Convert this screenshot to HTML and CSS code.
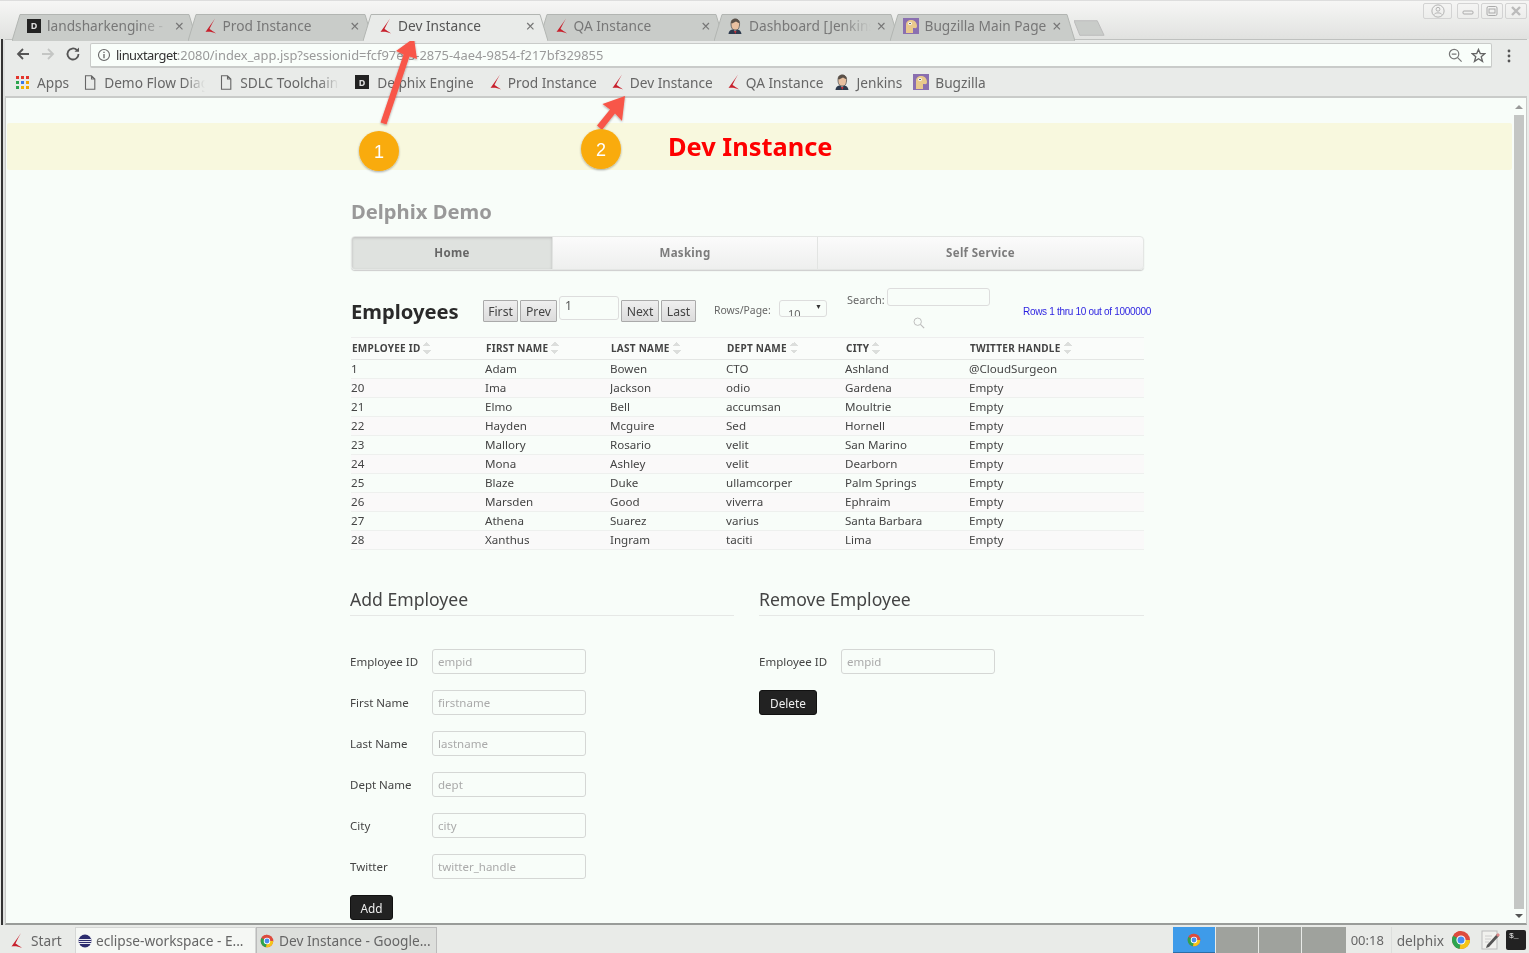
FILE: index.html
```html
<!DOCTYPE html>
<html lang="en">
<head>
<meta charset="utf-8">
<title>Dev Instance</title>
<link rel="stylesheet" href="styles.css">
</head>
<body>
<svg class="defs" width="0" height="0" aria-hidden="true">
  <symbol id="swoosh" viewBox="0 0 14 16"><path d="M12 .5C9.500 4 6 9 2.500 14C6 13.300 9.500 14 13 15.500C10.500 13.500 8 12 6.500 11C8 7.500 10 4 12 .5Z" fill="#c8202c"/></symbol>
  <symbol id="jenkins" viewBox="0 0 16 16"><path d="M4 6C4 2 6 1 8.500 1S13 3 12.500 7 11 12 8 12 4 9 4 6Z" fill="#e8c0a0" stroke="#555" stroke-width=".8"/><path d="M4 5C4 1.500 7 .5 9 .8S13 3 12.600 5.500L9 3.600 5 5.500Z" fill="#5a5048"/><path d="M1.500 16C2 12.500 4 11.500 6 11.500L8 13 10.500 11.500C13 12 14 13.500 14.500 16Z" fill="#2d3a4d"/><path d="M7 13H9.500L8.300 16Z" fill="#c8303a"/></symbol>
  <symbol id="bugzilla" viewBox="0 0 16 16"><rect width="16" height="16" fill="#8a6fb0"/><path d="M3 15V7C3 3 6 1.500 9 2S14 5 14 8 12 10 10 10V15Z" fill="#e9c98c"/><circle cx="7" cy="5.500" r="1.800" fill="#fff"/><circle cx="7" cy="5.500" r=".8" fill="#333"/></symbol>
  <symbol id="page" viewBox="0 0 12 15"><path d="M1.500 .8H7.500L10.800 4V14.200H1.500Z M7.500 .8V4H10.800" fill="none" stroke="#666" stroke-width="1.100"/></symbol>
  <symbol id="chrome" viewBox="0 0 20 20"><circle cx="10" cy="10" r="9" fill="#dd4b3e"/><path d="M10 10H19A9 9 0 0 1 8.500 18.900Z" fill="#f5c518"/><path d="M10 10L8.500 18.900A9 9 0 0 1 2.200 5.500Z" fill="#2da44e"/><path d="M10 10L2.200 5.500A9 9 0 0 1 10 1Z" fill="#dd4b3e"/><circle cx="10" cy="10" r="4.600" fill="#fff"/><circle cx="10" cy="10" r="3.500" fill="#4a8cf0"/></symbol>
</svg>

<div class="titlebar">
  <div class="tabs">
    <div class="tab">
      <svg class="tab-shape" viewBox="0 0 185 27" preserveAspectRatio="none"><path d="M0 27L8 .5H177L185 27"/></svg>
      <span class="dfav">D</span><span class="tab-label fade">landsharkengine -</span><span class="tab-x">×</span>
    </div>
    <div class="tab">
      <svg class="tab-shape" viewBox="0 0 185 27" preserveAspectRatio="none"><path d="M0 27L8 .5H177L185 27"/></svg>
      <svg class="fav"><use href="#swoosh"/></svg><span class="tab-label">Prod Instance</span><span class="tab-x">×</span>
    </div>
    <div class="tab active">
      <svg class="tab-shape" viewBox="0 0 185 27" preserveAspectRatio="none"><path d="M0 27L8 .5H177L185 27"/></svg>
      <svg class="fav"><use href="#swoosh"/></svg><span class="tab-label">Dev Instance</span><span class="tab-x">×</span>
    </div>
    <div class="tab">
      <svg class="tab-shape" viewBox="0 0 185 27" preserveAspectRatio="none"><path d="M0 27L8 .5H177L185 27"/></svg>
      <svg class="fav"><use href="#swoosh"/></svg><span class="tab-label">QA Instance</span><span class="tab-x">×</span>
    </div>
    <div class="tab">
      <svg class="tab-shape" viewBox="0 0 185 27" preserveAspectRatio="none"><path d="M0 27L8 .5H177L185 27"/></svg>
      <svg class="fav fav-lg"><use href="#jenkins"/></svg><span class="tab-label fade">Dashboard [Jenkins]</span><span class="tab-x">×</span>
    </div>
    <div class="tab">
      <svg class="tab-shape" viewBox="0 0 185 27" preserveAspectRatio="none"><path d="M0 27L8 .5H177L185 27"/></svg>
      <svg class="fav fav-lg"><use href="#bugzilla"/></svg><span class="tab-label">Bugzilla Main Page</span><span class="tab-x">×</span>
    </div>
    <svg class="newtab" viewBox="0 0 32 16"><path d="M0 .5H24L31 15.500H6Z"/></svg>
  </div>
  <div class="winbtns">
    <span class="winbtn user"><svg viewBox="0 0 16 16" width="14" height="14"><circle cx="8" cy="8" r="7" fill="none" stroke="#aaa"/><circle cx="8" cy="6" r="2.200" fill="none" stroke="#aaa"/><path d="M3.500 12C5 9.500 11 9.500 12.500 12" fill="none" stroke="#aaa"/></svg></span>
    <span class="winbtn"><svg viewBox="0 0 12 12" width="12" height="12"><rect x="1" y="6" width="10" height="3" rx="1" fill="none" stroke="#aaa"/></svg></span>
    <span class="winbtn"><svg viewBox="0 0 12 12" width="12" height="12"><rect x="1" y="1.500" width="10" height="9" rx="1.500" fill="none" stroke="#aaa"/><rect x="3" y="4" width="6" height="4" fill="none" stroke="#aaa"/></svg></span>
    <span class="winbtn"><svg viewBox="0 0 12 12" width="12" height="12"><path d="M2 2L10 10M10 2L2 10" stroke="#bbb" stroke-width="2.400" fill="none"/></svg></span>
  </div>
</div>

<div class="frame">
  <div class="toolbar">
    <svg class="navicon" viewBox="0 0 16 16"><path d="M14 8H3M8 3L3 8L8 13" fill="none" stroke="#555" stroke-width="1.800"/></svg>
    <svg class="navicon" viewBox="0 0 16 16"><path d="M2 8H13M8 3L13 8L8 13" fill="none" stroke="#c4c6c4" stroke-width="1.800"/></svg>
    <svg class="navicon" viewBox="0 0 16 16"><path d="M13.500 8A5.500 5.500 0 1 1 11.800 4" fill="none" stroke="#555" stroke-width="1.800"/><path d="M9.500 5.800H14V1.500Z" fill="#555"/></svg>
    <div class="omnibox">
      <svg class="info" viewBox="0 0 14 14"><circle cx="7" cy="7" r="5.500" fill="none" stroke="#666" stroke-width="1.100"/><path d="M7 6V10.200M7 3.800V5" stroke="#666" stroke-width="1.300"/></svg>
      <span class="url"><span class="host">linuxtarget</span>:2080/index_app.jsp?sessionid=fcf97ef5-2875-4ae4-9854-f217bf329855</span>
      <svg class="omni-icon" viewBox="0 0 16 16"><circle cx="6.500" cy="6.500" r="5" fill="none" stroke="#777" stroke-width="1.300"/><path d="M4 6.500H9M10 10L14.500 14.500" stroke="#777" stroke-width="1.300"/></svg>
      <svg class="omni-icon" viewBox="0 0 16 16"><path d="M8 1.500L9.900 6H14.800L10.900 9.200L12.300 14.300L8 11.400L3.700 14.300L5.100 9.200L1.200 6H6.100Z" fill="none" stroke="#666" stroke-width="1.400"/></svg>
    </div>
    <svg class="menu" viewBox="0 0 4 14"><circle cx="2" cy="2" r="1.400"/><circle cx="2" cy="7" r="1.400"/><circle cx="2" cy="12" r="1.400"/></svg>
  </div>

  <div class="bookmarks">
    <span class="bm apps">
      <svg class="appgrid" viewBox="0 0 13 13"><rect width="3" height="3" fill="#e3352c"/><rect x="5" width="3" height="3" fill="#e3352c"/><rect x="10" width="3" height="3" fill="#e3352c"/><rect y="5" width="3" height="3" fill="#2da44e"/><rect x="5" y="5" width="3" height="3" fill="#3a78e6"/><rect x="10" y="5" width="3" height="3" fill="#f0a400"/><rect y="10" width="3" height="3" fill="#2da44e"/><rect x="5" y="10" width="3" height="3" fill="#f0b400"/><rect x="10" y="10" width="3" height="3" fill="#f0a400"/></svg>
      Apps</span>
    <span class="bm bm-mid"><svg class="bm-page"><use href="#page"/></svg><span class="bm-clip w1">Demo Flow Diagram</span></span>
    <span class="bm bm-wide"><svg class="bm-page"><use href="#page"/></svg><span class="bm-clip w2">SDLC Toolchain</span></span>
    <span class="bm bm-next"><span class="dfav">D</span>Delphix Engine</span>
    <span class="bm"><svg class="fav"><use href="#swoosh"/></svg>Prod Instance</span>
    <span class="bm"><svg class="fav"><use href="#swoosh"/></svg>Dev Instance</span>
    <span class="bm bm-tight"><svg class="fav"><use href="#swoosh"/></svg>QA Instance</span>
    <span class="bm bm-tight"><svg class="fav fav-lg"><use href="#jenkins"/></svg>Jenkins</span>
    <span class="bm"><svg class="fav fav-lg"><use href="#bugzilla"/></svg>Bugzilla</span>
  </div>

  <div class="viewport">
    <main class="page">
      <div class="banner"><h1>Dev Instance</h1></div>
      <div class="container">
        <h2 class="brand">Delphix Demo</h2>
        <nav class="nav">
          <a class="nav-item current">Home</a>
          <a class="nav-item masking">Masking</a>
          <a class="nav-item self">Self Service</a>
        </nav>
        <div class="controls">
          <h3 class="emp-title">Employees</h3>
          <div class="pager">
            <button class="pg first">First</button>
            <button class="pg prev">Prev</button>
            <input class="pg-input" value="1" aria-label="page">
            <button class="pg next">Next</button>
            <button class="pg last">Last</button>
          </div>
          <label class="rows-label">Rows/Page:</label>
          <div class="rows-select"><span class="rows-val">10</span><span class="caret">▼</span></div>
          <div class="search">
            <div class="search-row"><label>Search:</label><input class="search-input" aria-label="search"></div>
            <svg class="search-icon" viewBox="0 0 14 14"><circle cx="5.500" cy="5.500" r="4.300" fill="none" stroke="#bbb" stroke-width="1.100"/><path d="M8.700 8.700L13 13" stroke="#bbb" stroke-width="1.300"/></svg>
          </div>
          <div class="rows-info">Rows 1 thru 10 out of 1000000</div>
        </div>
        <table class="grid">
          <colgroup><col class="c1"><col class="c2"><col class="c3"><col class="c4"><col class="c5"><col class="c6"></colgroup>
          <thead>
            <tr>
              <th>EMPLOYEE ID<span class="sort"></span></th>
              <th>FIRST NAME<span class="sort"></span></th>
              <th>LAST NAME<span class="sort"></span></th>
              <th>DEPT NAME<span class="sort"></span></th>
              <th>CITY<span class="sort"></span></th>
              <th>TWITTER HANDLE<span class="sort"></span></th>
            </tr>
          </thead>
          <tbody>
            <tr><td>1</td><td>Adam</td><td>Bowen</td><td>CTO</td><td>Ashland</td><td>@CloudSurgeon</td></tr>
            <tr><td>20</td><td>Ima</td><td>Jackson</td><td>odio</td><td>Gardena</td><td>Empty</td></tr>
            <tr><td>21</td><td>Elmo</td><td>Bell</td><td>accumsan</td><td>Moultrie</td><td>Empty</td></tr>
            <tr><td>22</td><td>Hayden</td><td>Mcguire</td><td>Sed</td><td>Hornell</td><td>Empty</td></tr>
            <tr><td>23</td><td>Mallory</td><td>Rosario</td><td>velit</td><td>San Marino</td><td>Empty</td></tr>
            <tr><td>24</td><td>Mona</td><td>Ashley</td><td>velit</td><td>Dearborn</td><td>Empty</td></tr>
            <tr><td>25</td><td>Blaze</td><td>Duke</td><td>ullamcorper</td><td>Palm Springs</td><td>Empty</td></tr>
            <tr><td>26</td><td>Marsden</td><td>Good</td><td>viverra</td><td>Ephraim</td><td>Empty</td></tr>
            <tr><td>27</td><td>Athena</td><td>Suarez</td><td>varius</td><td>Santa Barbara</td><td>Empty</td></tr>
            <tr><td>28</td><td>Xanthus</td><td>Ingram</td><td>taciti</td><td>Lima</td><td>Empty</td></tr>
          </tbody>
        </table>
        <div class="forms">
          <form class="form">
            <h3 class="form-title">Add Employee</h3>
            <div class="field"><label>Employee ID</label><input placeholder="empid"></div>
            <div class="field"><label>First Name</label><input placeholder="firstname"></div>
            <div class="field"><label>Last Name</label><input placeholder="lastname"></div>
            <div class="field"><label>Dept Name</label><input placeholder="dept"></div>
            <div class="field"><label>City</label><input placeholder="city"></div>
            <div class="field"><label>Twitter</label><input placeholder="twitter_handle"></div>
            <button type="button" class="dark add">Add</button>
          </form>
          <form class="form">
            <h3 class="form-title">Remove Employee</h3>
            <div class="field"><label>Employee ID</label><input placeholder="empid"></div>
            <button type="button" class="dark delete">Delete</button>
          </form>
        </div>
      </div>
    </main>
    <div class="scrollbar">
      <span class="sb-up"></span>
      <span class="sb-thumb"></span>
      <span class="sb-down"></span>
    </div>
  </div>
</div>

<footer class="taskbar">
  <span class="start"><svg class="start-icon"><use href="#swoosh"/></svg>Start</span>
  <span class="task eclipse"><svg class="task-icon" viewBox="0 0 14 14"><circle cx="7" cy="7" r="6.500" fill="#2c2c6e"/><path d="M.8 5.500H13.200M.5 7.500H13.500M1 9.500H13" stroke="#fff" stroke-width=".9"/></svg><span class="task-text">eclipse-workspace - E...</span></span>
  <span class="task on"><svg class="task-icon"><use href="#chrome"/></svg><span class="task-text">Dev Instance - Google...</span></span>
  <span class="tray-spacer"></span>
  <span class="pager-desk blue"><svg class="task-icon"><use href="#chrome"/></svg></span>
  <span class="pager-desk"></span>
  <span class="pager-desk"></span>
  <span class="pager-desk w3"></span>
  <span class="clock">00:18</span>
  <span class="who">delphix</span>
  <svg class="tray-chrome"><use href="#chrome"/></svg>
  <svg class="tray-note" viewBox="0 0 20 20"><rect x="2" y="1" width="15" height="18" fill="#f1f1ee" stroke="#bbb"/><path d="M5 6H12M5 9H11M5 12H9" stroke="#ccc"/><path d="M7 15L17 4L19 6L9 17L6 18Z" fill="#555"/><path d="M16 5L18 3L20 5L18 7Z" fill="#d88"/></svg>
  <span class="tray-term">$_</span>
</footer>

<div class="annot" aria-hidden="true">
  <svg class="annot-svg" viewBox="0 0 1529 953">
    <defs><filter id="sh" x="-20%" y="-20%" width="140%" height="140%"><feDropShadow dx="0" dy="1" stdDeviation="1" flood-color="#000" flood-opacity=".35"/></filter></defs>
    <path filter="url(#sh)" fill="#f8574a" d="M414 38L417 59L409.500 56.500L386.500 124.500L380.500 122.500L403.500 54.500L396 51Z"/>
    <path filter="url(#sh)" fill="#f8574a" d="M625 96L622 121L615 113.500L602 130L597 125.500L610 109.500L602.500 104Z"/>
    <circle filter="url(#sh)" cx="379" cy="151" r="20" fill="#f9ab0e"/>
    <circle filter="url(#sh)" cx="601" cy="149" r="20" fill="#f9ab0e"/>
  </svg>
  <span class="num n1">1</span>
  <span class="num n2">2</span>
</div>
</body>
</html>
```
FILE: styles.css
```css
* { box-sizing: border-box; }
html, body { height: 100%; }
body {
  margin: 0;
  height: 953px;
  overflow: hidden;
  display: flex;
  flex-direction: column;
  position: relative;
  font-family: "Noto Sans", sans-serif;
  font-size: 13px;
  color: #444;
  background: #e9ebe8;
  filter: blur(.35px);
}
.defs { position: absolute; }

/* Browser chrome */
.titlebar {
  height: 39px;
  flex: none;
  display: flex;
  justify-content: space-between;
  padding: 13px 2px 0 12px;
  background: linear-gradient(#f6f6f5, #e1e2e0);
  border-top: 1px solid #ddd;
}
.tabs { display: flex; align-items: flex-start; height: 26px; }
.tab {
  position: relative;
  width: 185px;
  height: 26px;
  margin-right: -9.500px;
  padding: 0 13px 3px 15px;
  display: flex;
  align-items: center;
  color: #777;
  font-size: 13.700px;
  white-space: nowrap;
}
.tab-shape { position: absolute; inset: 0; width: 100%; height: 27px; fill: #c9ccc9; stroke: #b2b5b2; stroke-width: 1; }
.tab > *:not(.tab-shape) { position: relative; }
.tab.active { color: #555; z-index: 2; }
.tab.active .tab-shape { fill: #e9ebe9; }
.tab-label { flex: 1; min-width: 0; overflow: hidden; margin-left: 6px; }
.tab-label.fade { -webkit-mask-image: linear-gradient(90deg, #000 75%, transparent 100%); mask-image: linear-gradient(90deg, #000 75%, transparent 100%); }
.tab-x { color: #777; font-size: 16px; line-height: 1; margin-left: 6px; }
.newtab { width: 31px; height: 16px; margin: 6px 0 0 9px; fill: #c9ccc9; stroke: #bbb; }
.fav { width: 14px; height: 16px; flex: none; }
.fav-lg { width: 16px; }
.tab .fav-lg { margin-left: -2px; }
.dfav {
  display: inline-flex;
  align-items: center;
  justify-content: center;
  flex: none;
  width: 14px;
  height: 14px;
  background: #222;
  color: #ddd;
  font-size: 9px;
  font-weight: 700;
}
.winbtns { display: flex; gap: 2px; margin-top: -11px; height: 16px; }
.winbtn {
  width: 22px;
  height: 16px;
  display: flex;
  align-items: center;
  justify-content: center;
  border: 1px solid #d3d3d3;
  border-radius: 2px;
}
.winbtn.user { width: 29px; margin-right: 3px; }

/* Window frame below the tab strip: dark edge at the left */
.frame {
  flex: 1;
  min-height: 0;
  display: flex;
  flex-direction: column;
  margin: 0 2px 0 1px;
  padding-left: 2px;
  border-left: 2px solid #333;
  background: #dfe1df;
}
.toolbar {
  height: 29px;
  flex: none;
  display: flex;
  align-items: center;
  gap: 9px;
  padding: 0 16px 0 10px;
  background: #e9ebe9;
  border-top: 1px solid #bfc1bf;
}
.navicon { width: 16px; height: 16px; flex: none; }
.omnibox {
  flex: 1;
  height: 25px;
  margin-top: 3px;
  display: flex;
  align-items: center;
  gap: 8px;
  padding: 0 5px 0 6px;
  background: #f9fefa;
  border: 1px solid #c9cbc9;
  border-bottom-width: 2px;
  border-radius: 2px;
}
.info { width: 14px; height: 14px; flex: none; }
.url { flex: 1; font-size: 12.900px; color: #9a9a9a; white-space: nowrap; margin-left: -3px; }
.host { color: #333; letter-spacing: -.5px; }
.omni-icon { width: 15px; height: 15px; flex: none; }
.menu { width: 4px; height: 14px; margin: 3px 0 0 6px; fill: #555; flex: none; }

.bookmarks {
  height: 30px;
  flex: none;
  display: flex;
  align-items: center;
  padding-left: 11px;
  background: #e9ebe9;
  border-bottom: 2px solid #c9cbc9;
  font-size: 13.700px;
  color: #666;
  white-space: nowrap;
}
.bm { display: flex; align-items: center; margin-right: 13px; gap: 6px; }
.bm-page { width: 12px; height: 15px; margin-right: 2px; flex: none; }
.bm .dfav { margin-right: 2px; }
.bm-mid { margin-right: 15px; }
.bm-wide { margin-right: 16px; }
.bm-next { margin-right: 14px; }
.bm-tight { margin-right: 11px; }
.bm-clip { display: block; overflow: hidden; -webkit-mask-image: linear-gradient(90deg, #000 80%, transparent 100%); mask-image: linear-gradient(90deg, #000 80%, transparent 100%); }
.w1 { width: 101px; }
.w2 { width: 99px; }
.apps { gap: 8px; margin-right: 15px; }
.appgrid { width: 13px; height: 13px; }

/* Viewport */
.viewport {
  flex: 1;
  min-height: 0;
  display: flex;
  background: #f8fdf9;
  border-left: 1px solid #c9cbc9;
  border-bottom: 2px solid #999c99;
  border-right: 1px solid #c9cbc9;
}
.page { flex: 1; min-width: 0; overflow: hidden; padding-top: 25px; }
.banner {
  height: 47px;
  margin-left: 1px;
  padding-left: 661px;
  background: #f8f8de;
  border-radius: 2px;
}
.banner h1 { margin: 0; font-size: 25.400px; line-height: 47px; color: #fe0000; font-weight: 700; }
.container { width: 793px; margin-left: 345px; }
.brand { margin: 26px 0 10px; font-size: 20.200px; line-height: 30px; font-weight: 700; color: #999; }
.nav {
  display: flex;
  height: 34px;
  border: 1px solid #e4e6e4;
  border-radius: 4px;
  overflow: hidden;
  box-shadow: 0 1px 1px #ccc;
  background: linear-gradient(#fbfbfb, #eeefee);
}
.nav-item {
  display: flex;
  align-items: center;
  justify-content: center;
  padding-bottom: 2px;
  font-size: 11.500px;
  font-weight: 700;
  color: #7c7c7c;
  letter-spacing: .3px;
  border-right: 1px solid #e2e4e2;
}
.nav-item.current { width: 201px; background: #dfe2df; color: #666; box-shadow: inset 0 1px 3px #bbb; }
.nav-item.masking { width: 265px; }
.nav-item.self { flex: 1; border-right: 0; }

.controls { position: relative; display: flex; height: 67px; align-items: flex-start; }
.emp-title { margin: 26px 0 0; font-size: 20.200px; line-height: 30px; font-weight: 700; color: #2a2a2a; width: 132px; flex: none; }
.pager { display: flex; align-items: flex-start; gap: 2px; margin-top: 25px; flex: none; }
.pg {
  height: 22px;
  margin-top: 5px;
  padding: 0;
  font: 12.200px "Noto Sans", sans-serif;
  color: #444;
  background: linear-gradient(#efefef, #dcdcdc);
  border: 1px solid #aaa;
  border-radius: 1px;
}
.first { width: 35px; }
.prev { width: 37px; }
.next { width: 38px; }
.last { width: 35px; }
.pg-input {
  width: 60px;
  height: 24px;
  margin-top: 1px;
  padding: 0 5px 6px;
  font: 12.200px "Noto Sans", sans-serif;
  color: #555;
  background: #f8fdf9;
  border: 1px solid #ddd;
  border-radius: 3px;
}
.rows-label { margin: 32px 0 0 18px; width: 65px; flex: none; font-size: 10.400px; line-height: 16px; color: #666; }
.rows-select {
  position: relative;
  width: 48px;
  height: 17px;
  margin-top: 30px;
  overflow: hidden;
  padding-left: 8px;
  border: 1px solid #ddd;
  border-radius: 3px;
  font-size: 11px;
  color: #666;
  flex: none;
}
.rows-val { display: block; line-height: 25px; }
.caret { position: absolute; right: 4px; top: 1px; font-size: 7px; line-height: 10px; color: #333; }
.search { width: 143px; margin: 18px 0 0 20px; flex: none; }
.search-row { display: flex; align-items: flex-start; gap: 2px; font-size: 11px; color: #666; }
.search-row label { margin-top: 4px; }
.search-input { width: 103px; height: 18px; background: #f8fdf9; border: 1px solid #ddd; border-radius: 3px; padding: 0; }
.search-icon { display: block; width: 12px; height: 12px; margin: 10px 0 0 66px; }
.rows-info {
  position: absolute;
  left: 672px;
  top: 35px;
  font: 10px/14px "Liberation Sans", Arial, sans-serif;
  letter-spacing: -.3px;
  color: #2a1fe0;
  white-space: nowrap;
}

.grid { width: 793px; border-collapse: collapse; table-layout: fixed; font-size: 11.600px; color: #444; }
.c1 { width: 134px; }
.c2 { width: 125px; }
.c3 { width: 116px; }
.c4 { width: 119px; }
.c5 { width: 124px; }
.grid th {
  height: 22px;
  padding: 0 0 2px 1px;
  line-height: 14px;
  text-align: left;
  font-size: 10px;
  letter-spacing: .25px;
  font-weight: 700;
  color: #444;
  background: #fafcfa;
  border-top: 1px solid #eee;
  border-bottom: 1px solid #e4e6e4;
  white-space: nowrap;
}
.sort {
  display: inline-block;
  vertical-align: -3px;
  width: 8px;
  height: 15px;
  margin-left: 3px;
  background:
    linear-gradient(135deg, transparent 50%, #dcdedc 50%) 0 2px / 4px 4px no-repeat,
    linear-gradient(225deg, transparent 50%, #dcdedc 50%) 4px 2px / 4px 4px no-repeat,
    linear-gradient(45deg, transparent 50%, #dcdedc 50%) 0 10px / 4px 4px no-repeat,
    linear-gradient(315deg, transparent 50%, #dcdedc 50%) 4px 10px / 4px 4px no-repeat;
}
.grid td { height: 19px; padding: 0 0 1px; border-bottom: 1px solid #eef0ee; white-space: nowrap; overflow: hidden; line-height: 17px; }
.grid tbody tr:nth-child(even) td { background: #faf9f9; }

.forms { display: grid; grid-template-columns: 384px 385px; column-gap: 25px; margin-left: -1px; margin-top: 36px; }
.form-title { margin: 0 0 33px; padding-bottom: 3px; font-size: 17.600px; line-height: 26px; font-weight: 400; color: #444; border-bottom: 1px solid #e6e8e6; }
.field { display: flex; align-items: center; height: 25px; margin-bottom: 16px; font-size: 11.500px; color: #444; }
.field label { width: 82px; flex: none; }
.field input {
  width: 154px;
  height: 25px;
  padding: 0 5px;
  font: 11.500px "Noto Sans", sans-serif;
  background: #f8fdf9;
  border: 1px solid #d5d7d5;
  border-radius: 3px;
}
.field input::placeholder { color: #aaa; opacity: 1; }
.dark {
  display: block;
  height: 25px;
  padding: 0;
  font: 11.800px "Noto Sans", sans-serif;
  color: #eee;
  background: #222;
  border: 1px solid #111;
  border-radius: 3px;
}
.add { width: 43px; margin-top: 1px; }
.delete { width: 58px; }

.scrollbar {
  width: 14px;
  flex: none;
  display: flex;
  flex-direction: column;
  align-items: center;
  padding: 7px 0 5px;
  background: #f8fdf9;
}
.sb-up { width: 0; height: 0; border: 4px solid transparent; border-top: 0; border-bottom: 4px solid #999; }
.sb-thumb { width: 10px; flex: 1; margin: 6px 0 5px; background: #c4c6c4; }
.sb-down { width: 0; height: 0; border: 4px solid transparent; border-bottom: 0; border-top: 4px solid #555; }

/* Taskbar */
.taskbar {
  height: 28px;
  flex: none;
  display: flex;
  align-items: stretch;
  padding-top: 2px;
  background: #e9ebe8;
  font-size: 13.700px;
  color: #666;
  white-space: nowrap;
}
.start { display: flex; align-items: center; width: 75px; padding-left: 9px; gap: 8px; color: #666; }
.start-icon { width: 14px; height: 19px; flex: none; }
.task {
  width: 181px;
  display: flex;
  align-items: center;
  gap: 5px;
  padding-left: 3px;
  background: #f5f7f4;
  border: 1px solid #d5d7d5;
  border-bottom: 0;
  color: #666;
}
.task.eclipse { padding-left: 2px; gap: 4px; }
.task.on { background: #dddfdc; border-color: #bbb; }
.task-icon { width: 14px; height: 14px; flex: none; }
.tray-spacer { flex: 1; }
.pager-desk { width: 42px; margin-right: 1px; background: #9fa29d; display: flex; align-items: center; justify-content: center; }
.pager-desk.blue { background: #3e9be9; border-bottom: 1px solid #2c6ea6; }
.pager-desk.w3 { width: 44px; }
.clock { display: flex; align-items: center; margin-left: 4px; width: 41px; border-right: 1px solid #dcdedc; font-size: 13px; color: #666; }
.who { display: flex; align-items: center; margin-left: 5px; font-size: 13.700px; color: #666; }
.tray-chrome { width: 20px; height: 20px; align-self: center; margin-left: 7px; }
.tray-note { width: 20px; height: 20px; align-self: center; margin-left: 9px; }
.tray-term {
  align-self: center;
  width: 20px;
  height: 20px;
  margin: 0 3px 0 6px;
  background: #222;
  color: #eee;
  font: 8px/12px "Liberation Mono", monospace;
  padding-left: 3px;
  border-radius: 2px;
}

/* Callouts drawn over the screenshot */
.annot { position: absolute; inset: 0; pointer-events: none; }
.annot-svg { position: absolute; inset: 0; width: 100%; height: 100%; }
.num { position: absolute; width: 20px; text-align: center; color: #fff; font: 18px/20px "Liberation Sans", Arial, sans-serif; }
.n1 { left: 369px; top: 142px; }
.n2 { left: 591px; top: 140px; }
```
